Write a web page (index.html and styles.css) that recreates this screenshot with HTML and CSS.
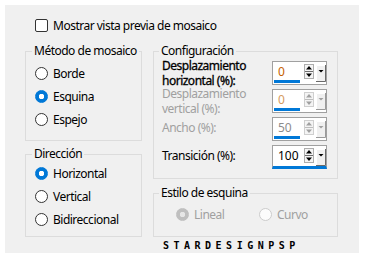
FILE: index.html
```html
<!DOCTYPE html>
<html lang="es">
  <head>
    <meta charset="utf-8">
    <title>Mosaico sin costuras</title>
    <link rel="stylesheet" href="styles.css">
  </head>
  <body>
    <div class="panel">
      <div class="check-row">
        <span class="checkbox"></span>
        <span>Mostrar vista previa de mosaico</span>
      </div>

      <div class="columns">
        <div class="col col-left">
          <fieldset class="group group-method">
            <legend>Método de mosaico</legend>
            <div class="radio-row"><span class="radio"></span>Borde</div>
            <div class="radio-row"><span class="radio checked"></span>Esquina</div>
            <div class="radio-row"><span class="radio"></span>Espejo</div>
          </fieldset>

          <fieldset class="group group-direction">
            <legend>Dirección</legend>
            <div class="radio-row"><span class="radio checked"></span>Horizontal</div>
            <div class="radio-row"><span class="radio"></span>Vertical</div>
            <div class="radio-row"><span class="radio"></span>Bidireccional</div>
          </fieldset>
        </div>

        <div class="col col-right">
          <fieldset class="group group-config">
            <legend>Configuración</legend>

            <div class="field-row">
              <span class="field-label strong">Desplazamiento<br>horizontal (%):</span>
              <div class="spin">
                <span class="spin-value">0</span>
                <svg class="spin-arrows" width="10" height="15" viewBox="0 0 10 15">
                  <rect x="0.5" y="0.5" width="9" height="14" fill="#f4f4f4" stroke="#adadad"/>
                  <line x1="1" y1="7.5" x2="9" y2="7.5" stroke="#6d6d6d"/>
                  <path d="M5 2 L8 5.5 L2 5.5 Z" fill="#000"/>
                  <path d="M2 9.5 L8 9.5 L5 13 Z" fill="#000"/>
                </svg>
                <svg class="spin-drop" width="10" height="17" viewBox="0 0 10 17">
                  <rect x="0" y="0" width="10" height="17" fill="#f0f0f0"/>
                  <path d="M0.5 16.5 V0.5 H9.5" fill="none" stroke="#fff"/>
                  <path d="M9.5 0 V16.5 H0" fill="none" stroke="#696969"/>
                  <path d="M2.5 5 L7.5 5 L5 7.5 Z" fill="#000"/>
                </svg>
              </div>
            </div>

            <div class="field-row">
              <span class="field-label disabled">Desplazamiento<br>vertical (%):</span>
              <div class="spin disabled">
                <span class="spin-value">0</span>
                <svg class="spin-arrows" width="10" height="15" viewBox="0 0 10 15">
                  <rect x="0.5" y="0.5" width="9" height="14" fill="#f4f4f4" stroke="#cfcfcf"/>
                  <line x1="1" y1="7.5" x2="9" y2="7.5" stroke="#bdbdbd"/>
                  <path d="M5 2 L8 5.5 L2 5.5 Z" fill="#a0a0a0"/>
                  <path d="M2 9.5 L8 9.5 L5 13 Z" fill="#a0a0a0"/>
                </svg>
                <svg class="spin-drop" width="10" height="17" viewBox="0 0 10 17">
                  <rect x="0" y="0" width="10" height="17" fill="#f0f0f0"/>
                  <path d="M0.5 16.5 V0.5 H9.5" fill="none" stroke="#fff"/>
                  <path d="M9.5 0 V16.5 H0" fill="none" stroke="#9a9a9a"/>
                  <path d="M2.5 5 L7.5 5 L5 7.5 Z" fill="#a0a0a0"/>
                </svg>
              </div>
            </div>

            <div class="field-row">
              <span class="field-label disabled single">Ancho (%):</span>
              <div class="spin disabled grey">
                <span class="spin-value">50</span>
                <svg class="spin-arrows" width="10" height="15" viewBox="0 0 10 15">
                  <rect x="0.5" y="0.5" width="9" height="14" fill="#f4f4f4" stroke="#cfcfcf"/>
                  <line x1="1" y1="7.5" x2="9" y2="7.5" stroke="#bdbdbd"/>
                  <path d="M5 2 L8 5.5 L2 5.5 Z" fill="#a0a0a0"/>
                  <path d="M2 9.5 L8 9.5 L5 13 Z" fill="#a0a0a0"/>
                </svg>
                <svg class="spin-drop" width="10" height="17" viewBox="0 0 10 17">
                  <rect x="0" y="0" width="10" height="17" fill="#f0f0f0"/>
                  <path d="M0.5 16.5 V0.5 H9.5" fill="none" stroke="#fff"/>
                  <path d="M9.5 0 V16.5 H0" fill="none" stroke="#9a9a9a"/>
                  <path d="M2.5 5 L7.5 5 L5 7.5 Z" fill="#a0a0a0"/>
                </svg>
              </div>
            </div>

            <div class="field-row">
              <span class="field-label single">Transición (%):</span>
              <div class="spin focused">
                <span class="spin-value">100</span>
                <svg class="spin-arrows" width="10" height="15" viewBox="0 0 10 15">
                  <rect x="0.5" y="0.5" width="9" height="14" fill="#f4f4f4" stroke="#adadad"/>
                  <line x1="1" y1="7.5" x2="9" y2="7.5" stroke="#6d6d6d"/>
                  <path d="M5 2 L8 5.5 L2 5.5 Z" fill="#000"/>
                  <path d="M2 9.5 L8 9.5 L5 13 Z" fill="#000"/>
                </svg>
                <svg class="spin-drop" width="10" height="17" viewBox="0 0 10 17">
                  <rect x="0" y="0" width="10" height="17" fill="#f0f0f0"/>
                  <path d="M0.5 16.5 V0.5 H9.5" fill="none" stroke="#fff"/>
                  <path d="M9.5 0 V16.5 H0" fill="none" stroke="#696969"/>
                  <path d="M2.5 5 L7.5 5 L5 7.5 Z" fill="#000"/>
                </svg>
              </div>
            </div>
          </fieldset>

          <fieldset class="group group-corner">
            <legend>Estilo de esquina</legend>
            <div class="corner-row">
              <div class="radio-row disabled"><span class="radio checked"></span>Lineal</div>
              <div class="radio-row disabled"><span class="radio"></span>Curvo</div>
            </div>
          </fieldset>
        </div>
      </div>

      <div class="watermark">STARDESIGNPSP</div>
    </div>
  </body>
</html>
```

FILE: styles.css
```css
body {
  margin: 0;
  background: #fff;
  font-family: "Noto Sans", "Open Sans", sans-serif;
  font-size: 12px;
  letter-spacing: -0.5px;
  color: #000;
}

.panel {
  box-sizing: border-box;
  width: 354px;
  height: 248px;
  margin: 5px;
  padding: 12px 0 0 20px;
  background: #f0f0f0;
}

.check-row {
  display: flex;
  align-items: center;
  gap: 5px;
  height: 16px;
  margin-left: 10px;
  white-space: nowrap;
}
.checkbox {
  box-sizing: border-box;
  width: 13px;
  height: 13px;
  border: 1px solid #333;
  border-radius: 2px;
  background: #fff;
}

.columns {
  display: flex;
  gap: 11px;
  margin-top: 10px;
}
.col {
  display: flex;
  flex-direction: column;
}
.col-left {
  width: 117px;
  gap: 5px;
}
.col-right {
  width: 185px;
  gap: 6px;
}

.group {
  margin: 0;
  min-width: 0;
  border: 1px solid #dcdcdc;
  padding: 0 0 0 9px;
}
.group legend {
  height: 16px;
  line-height: 16px;
  padding: 0 2px;
  margin-left: -3px;
  white-space: nowrap;
}
.group-method {
  padding-top: 3px;
  padding-bottom: 9px;
}
.group-direction {
  padding-bottom: 5px;
}
.group-config {
  padding: 0 10px 7px 8px;
}
.group-corner {
  padding: 2px 0 10px 8px;
}

.radio-row {
  display: flex;
  align-items: center;
  gap: 5px;
  height: 23px;
  white-space: nowrap;
}
.radio {
  flex-shrink: 0;
  box-sizing: border-box;
  width: 13px;
  height: 13px;
  border: 1px solid #333;
  border-radius: 50%;
  background: #fff;
}
.radio.checked {
  border-color: #0078d7;
  background: radial-gradient(circle, #fff 0 2.5px, #0078d7 3px);
}
.radio-row.disabled {
  color: #a0a0a0;
}
.radio-row.disabled .radio {
  border-color: #cccccc;
  background: #fcfcfc;
}
.radio-row.disabled .radio.checked {
  border-color: #bfbfbf;
  background: radial-gradient(circle, #e6e6e6 0 2.5px, #bfbfbf 3px);
}

.corner-row {
  display: grid;
  grid-template-columns: 83px auto;
  padding-left: 14px;
}

.field-row {
  display: flex;
  align-items: center;
  justify-content: space-between;
  height: 28px;
}
.field-label {
  line-height: 15px;
  white-space: nowrap;
}
.field-label.single {
  padding-bottom: 3px;
}
.field-label.strong {
  color: #000;
  -webkit-text-stroke: 0.3px #000;
}
.field-label.disabled {
  color: #a0a0a0;
}

.spin {
  flex-shrink: 0;
  box-sizing: border-box;
  display: flex;
  align-items: flex-start;
  width: 55px;
  height: 24px;
  padding-left: 1px;
  border: 1px solid #a0a0a0;
  background: #fff;
}
.spin-value {
  box-sizing: border-box;
  width: 27px;
  height: 21px;
  padding: 1px 0 0 4px;
  line-height: 17px;
  letter-spacing: 0;
  color: #c65f00;
  border-bottom: 3px solid #0078d7;
}
.spin-arrows {
  flex-shrink: 0;
  margin: 2px 0 0 4px;
}
.spin-drop {
  flex-shrink: 0;
  margin: 3px 0 0 2px;
}
.spin.disabled .spin-value {
  color: #d59a5e;
}
.spin.grey .spin-value {
  color: #8c8c8c;
}
.spin.focused {
  border-bottom: 3px solid #0078d7;
}
.spin.focused .spin-value {
  color: #000;
  border-bottom-color: transparent;
}

.watermark {
  margin: 4px 0 0 138px;
  font-family: "DejaVu Sans Mono", monospace;
  font-weight: bold;
  font-size: 10px;
  line-height: 10px;
  letter-spacing: 4.5px;
}
```
